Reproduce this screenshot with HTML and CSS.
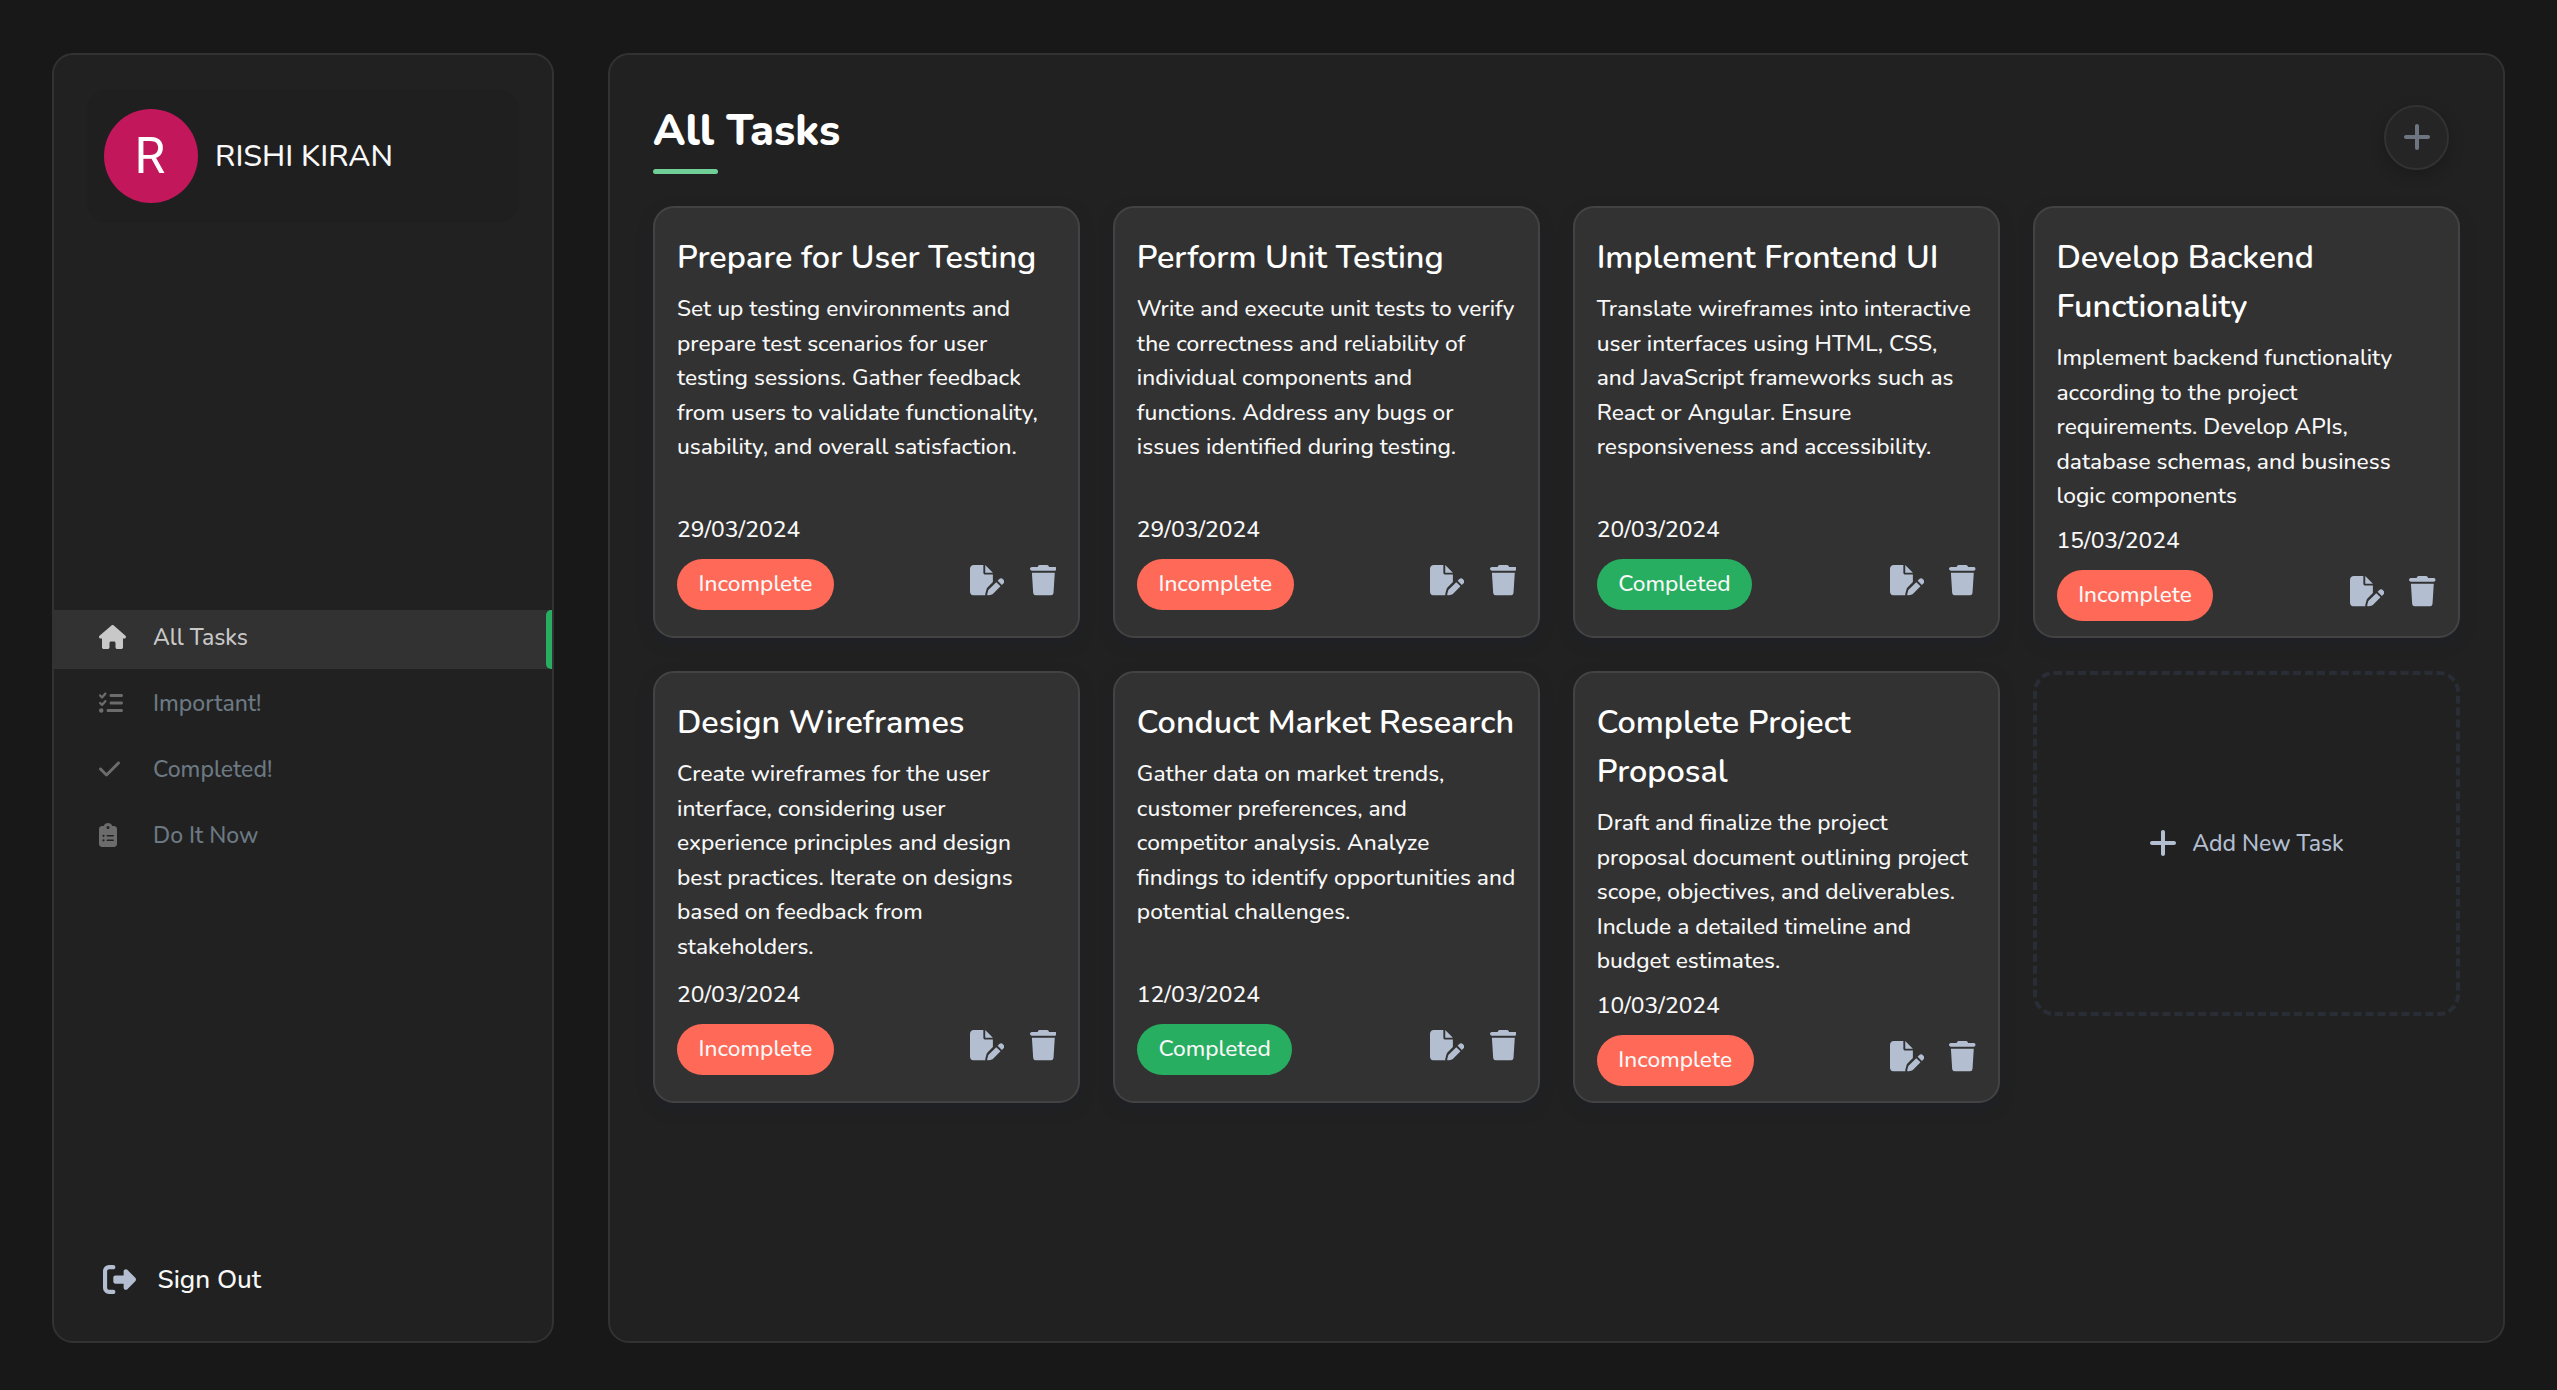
FILE: index.html
```html
<!DOCTYPE html>
<html lang="en">
<head>
<meta charset="utf-8">
<title>All Tasks</title>
<link rel="stylesheet" href="styles.css">
</head>
<body>
<svg class="sprite" xmlns="http://www.w3.org/2000/svg">
  <symbol id="house" viewBox="0 0 576 512"><path d="M575.8 255.5c0 18-15 32.1-32 32.1h-32l.7 160.2c0 2.7-.2 5.4-.5 8.1V472c0 22.1-17.9 40-40 40H456c-1.1 0-2.2 0-3.3-.1c-1.4 .1-2.8 .1-4.2 .1H416 392c-22.1 0-40-17.9-40-40V448 384c0-17.700-14.300-32-32-32H256c-17.700 0-32 14.300-32 32v64 24c0 22.100-17.900 40-40 40H160 128.100c-1.500 0-3-.1-4.500-.2c-1.200 .1-2.400 .2-3.600 .2H104c-22.100 0-40-17.900-40-40V360c0-.9 0-1.900 .1-2.800V287.600H32c-18 0-32-14-32-32.100c0-9 3-17 10-24L266.400 8c7-7 15-8 22-8s15 2 21 7L564.800 231.500c8 7 12 15 11 24z"/></symbol>
  <symbol id="list-check" viewBox="0 0 512 512"><path d="M152.100 38.200c9.900 8.900 10.700 24 1.800 33.900l-72 80c-4.400 4.900-10.600 7.800-17.200 7.900s-12.900-2.400-17.600-7L7 113C-2.300 103.600-2.300 88.400 7 79s24.600-9.400 33.900 0l22.100 22.100 55.100-61.200c8.900-9.900 24-10.700 33.900-1.800zm0 160c9.900 8.900 10.700 24 1.800 33.900l-72 80c-4.400 4.900-10.600 7.800-17.200 7.900s-12.900-2.400-17.600-7L7 273c-9.400-9.400-9.400-24.600 0-33.900s24.600-9.400 33.900 0l22.100 22.100 55.100-61.200c8.900-9.900 24-10.700 33.900-1.800zM224 96c0-17.700 14.300-32 32-32H480c17.700 0 32 14.300 32 32s-14.300 32-32 32H256c-17.700 0-32-14.300-32-32zm0 160c0-17.700 14.300-32 32-32H480c17.700 0 32 14.300 32 32s-14.300 32-32 32H256c-17.700 0-32-14.300-32-32zM160 416c0-17.700 14.300-32 32-32H480c17.700 0 32 14.300 32 32s-14.300 32-32 32H192c-17.700 0-32-14.300-32-32zM48 368a48 48 0 1 1 0 96 48 48 0 1 1 0-96z"/></symbol>
  <symbol id="check" viewBox="0 0 448 512"><path d="M438.600 105.400c12.500 12.500 12.500 32.800 0 45.300l-256 256c-12.500 12.500-32.800 12.500-45.300 0l-128-128c-12.500-12.500-12.500-32.800 0-45.300s32.800-12.500 45.300 0L160 338.700 393.400 105.400c12.500-12.500 32.800-12.500 45.300 0z"/></symbol>
  <symbol id="clipboard" viewBox="0 0 384 512"><path d="M192 0c-41.800 0-77.400 26.700-90.500 64H64C28.700 64 0 92.700 0 128V448c0 35.300 28.700 64 64 64H320c35.300 0 64-28.700 64-64V128c0-35.300-28.700-64-64-64H282.500C269.400 26.700 233.800 0 192 0zm0 64a32 32 0 1 1 0 64 32 32 0 1 1 0-64zM72 272a24 24 0 1 1 48 0 24 24 0 1 1 -48 0zm104-16H304c8.800 0 16 7.200 16 16s-7.200 16-16 16H176c-8.800 0-16-7.200-16-16s7.200-16 16-16zM72 368a24 24 0 1 1 48 0 24 24 0 1 1 -48 0zm88 0c0-8.800 7.200-16 16-16H304c8.800 0 16 7.200 16 16s-7.200 16-16 16H176c-8.800 0-16-7.200-16-16z"/></symbol>
  <symbol id="sign-out" viewBox="0 0 512 512"><path d="M377.900 105.900L500.700 228.700c7.200 7.200 11.300 17.100 11.300 27.300s-4.100 20.100-11.300 27.300L377.900 406.100c-6.400 6.400-15 9.900-24 9.900c-18.700 0-33.900-15.200-33.900-33.900l0-62.100-128 0c-17.700 0-32-14.300-32-32l0-64c0-17.700 14.300-32 32-32l128 0 0-62.100c0-18.700 15.200-33.900 33.900-33.900c9 0 17.600 3.600 24 9.900zM160 96L96 96c-17.700 0-32 14.300-32 32l0 256c0 17.700 14.300 32 32 32l64 0c17.700 0 32 14.300 32 32s-14.300 32-32 32l-64 0c-53 0-96-43-96-96L0 128C0 75 43 32 96 32l64 0c17.700 0 32 14.300 32 32s-14.300 32-32 32z"/></symbol>
  <symbol id="edit" viewBox="0 0 576 512"><path d="M0 64C0 28.700 28.700 0 64 0H224V128c0 17.700 14.300 32 32 32H384V285.700l-86.800 86.800c-10.300 10.300-17.500 23.100-21 37.200l-18.700 74.900c-2.300 9.200-1.800 18.800 1.300 27.500H64c-35.300 0-64-28.700-64-64V64zm384 64H256V0L384 128zM549.800 235.700l14.400 14.400c15.600 15.600 15.600 40.900 0 56.600l-29.400 29.400-71-71 29.400-29.400c15.600-15.600 40.900-15.600 56.600 0zM311.900 417L441.100 287.800l71 71L382.900 487.900c-4.100 4.100-9.200 7-14.900 8.400l-60.100 15c-5.500 1.400-11.200-.2-15.200-4.200s-5.600-9.700-4.200-15.200l15-60.100c1.400-5.600 4.300-10.800 8.400-14.900z"/></symbol>
  <symbol id="trash" viewBox="0 0 448 512"><path d="M135.200 17.700L128 32H32C14.300 32 0 46.300 0 64S14.300 96 32 96H416c17.700 0 32-14.300 32-32s-14.300-32-32-32H320l-7.200-14.300C307.400 6.800 296.300 0 284.200 0H163.800c-12.100 0-23.200 6.800-28.600 17.700zM416 128H32L53.200 467c1.600 25.300 22.600 45 47.900 45H346.900c25.300 0 46.300-19.700 47.900-45L416 128z"/></symbol>
  <symbol id="plus" viewBox="0 0 448 512"><path d="M256 80c0-17.700-14.300-32-32-32s-32 14.300-32 32V224H48c-17.700 0-32 14.300-32 32s14.300 32 32 32H192V432c0 17.700 14.300 32 32 32s32-14.300 32-32V288H400c17.700 0 32-14.300 32-32s-14.300-32-32-32H256V80z"/></symbol>
</svg>

<nav class="sidebar">
  <div class="profile">
    <div class="avatar">R</div>
    <h1 class="name">RISHI KIRAN</h1>
  </div>
  <ul class="nav">
    <li class="nav-item active"><span class="nav-icon"><svg class="w576"><use href="#house"/></svg></span>All Tasks</li>
    <li class="nav-item"><span class="nav-icon"><svg class="w512"><use href="#list-check"/></svg></span>Important!</li>
    <li class="nav-item"><span class="nav-icon"><svg class="w448"><use href="#check"/></svg></span>Completed!</li>
    <li class="nav-item"><span class="nav-icon"><svg class="w384"><use href="#clipboard"/></svg></span>Do It Now</li>
  </ul>
  <div class="sign-out"><svg class="w512"><use href="#sign-out"/></svg>Sign Out</div>
</nav>

<main class="main">
  <header class="head">
    <h2 class="heading">All Tasks</h2>
    <button class="add"><svg class="w448"><use href="#plus"/></svg></button>
  </header>
  <div class="grid">
    <article class="card">
      <h3>Prepare for User Testing</h3>
      <p>Set up testing environments and<br>prepare test scenarios for user<br>testing sessions. Gather feedback<br>from users to validate functionality,<br>usability, and overall satisfaction.</p>
      <time>29/03/2024</time>
      <footer><span class="badge">Incomplete</span><svg class="w576"><use href="#edit"/></svg><svg class="w448"><use href="#trash"/></svg></footer>
    </article>
    <article class="card">
      <h3>Perform Unit Testing</h3>
      <p>Write and execute unit tests to verify<br>the correctness and reliability of<br>individual components and<br>functions. Address any bugs or<br>issues identified during testing.</p>
      <time>29/03/2024</time>
      <footer><span class="badge">Incomplete</span><svg class="w576"><use href="#edit"/></svg><svg class="w448"><use href="#trash"/></svg></footer>
    </article>
    <article class="card">
      <h3>Implement Frontend UI</h3>
      <p>Translate wireframes into interactive<br>user interfaces using HTML, CSS,<br>and JavaScript frameworks such as<br>React or Angular. Ensure<br>responsiveness and accessibility.</p>
      <time>20/03/2024</time>
      <footer><span class="badge done">Completed</span><svg class="w576"><use href="#edit"/></svg><svg class="w448"><use href="#trash"/></svg></footer>
    </article>
    <article class="card">
      <h3>Develop Backend<br>Functionality</h3>
      <p>Implement backend functionality<br>according to the project<br>requirements. Develop APIs,<br>database schemas, and business<br>logic components</p>
      <time>15/03/2024</time>
      <footer><span class="badge">Incomplete</span><svg class="w576"><use href="#edit"/></svg><svg class="w448"><use href="#trash"/></svg></footer>
    </article>
    <article class="card">
      <h3>Design Wireframes</h3>
      <p>Create wireframes for the user<br>interface, considering user<br>experience principles and design<br>best practices. Iterate on designs<br>based on feedback from<br>stakeholders.</p>
      <time>20/03/2024</time>
      <footer><span class="badge">Incomplete</span><svg class="w576"><use href="#edit"/></svg><svg class="w448"><use href="#trash"/></svg></footer>
    </article>
    <article class="card">
      <h3>Conduct Market Research</h3>
      <p>Gather data on market trends,<br>customer preferences, and<br>competitor analysis. Analyze<br>findings to identify opportunities and<br>potential challenges.</p>
      <time>12/03/2024</time>
      <footer><span class="badge done">Completed</span><svg class="w576"><use href="#edit"/></svg><svg class="w448"><use href="#trash"/></svg></footer>
    </article>
    <article class="card">
      <h3>Complete Project<br>Proposal</h3>
      <p>Draft and finalize the project<br>proposal document outlining project<br>scope, objectives, and deliverables.<br>Include a detailed timeline and<br>budget estimates.</p>
      <time>10/03/2024</time>
      <footer><span class="badge">Incomplete</span><svg class="w576"><use href="#edit"/></svg><svg class="w448"><use href="#trash"/></svg></footer>
    </article>
    <div class="new-task"><svg class="w448"><use href="#plus"/></svg>Add New Task</div>
  </div>
</main>
</body>
</html>
```
FILE: styles.css
```css
* { box-sizing: border-box; margin: 0; padding: 0; }

body {
  display: flex;
  gap: 54px;
  height: 1390px;
  padding: 53px 52px 47px;
  background: #181818;
  color: #f8f8f8;
  font-family: Nunito, Lato, "Open Sans", sans-serif;
  font-size: 22.7px;
  font-weight: 500;
  white-space: nowrap;
  overflow: hidden;
}

.sprite { position: absolute; width: 0; height: 0; }

svg { height: 1em; fill: currentColor; flex: none; display: block; }
.w576 { width: 1.125em; }
.w512 { width: 1em; }
.w448 { width: .875em; }
.w384 { width: .75em; }

.sidebar, .main {
  background: #212121;
  border: 2px solid #323232;
  border-radius: 21px;
}

.sidebar {
  display: flex;
  flex-direction: column;
  justify-content: space-between;
  width: 502px;
  flex: none;
}

.profile {
  display: flex;
  align-items: center;
  gap: 17px;
  height: 134px;
  margin: 34px 33px 0;
  padding-left: 17px;
  background: #1f1f1f;
  border-radius: 21px;
}

.avatar {
  width: 94px;
  height: 94px;
  border-radius: 50%;
  background: #c2185b;
  color: #fff;
  font: 400 50px/94px Roboto, sans-serif;
  text-align: center;
  text-indent: -2px;
}

.name { font-size: 30.3px; font-weight: 500; }

.nav { list-style: none; display: grid; gap: 7px; margin-bottom: 4px; }

.nav-item {
  display: flex;
  align-items: center;
  height: 59px;
  padding: 0 0 4px 45px;
  color: #6c7983;
  font-size: 23px;
}

.nav-icon { width: 54px; font-size: 24px; color: #6c6c6c; }

.active {
  position: relative;
  background: #323232;
  color: #c8c8c8;
}
.active .nav-icon { color: #c8c8c8; }
.active::after {
  content: "";
  position: absolute;
  right: 0;
  top: 0;
  width: 6px;
  height: 100%;
  background: #27ae60;
  border-radius: 5px 0 0 5px;
}

.sign-out {
  display: flex;
  align-items: center;
  gap: 21.5px;
  height: 44px;
  margin: 0 0 40px 49px;
  font-size: 26.1px;
}
.sign-out svg { font-size: 33px; color: #b3bfd1; }

.main { flex: 1; padding: 43px; }

.head {
  display: flex;
  justify-content: space-between;
  height: 108px;
  padding-right: 11px;
}

.heading {
  align-self: flex-start;
  height: 76px;
  padding-top: 3px;
  font-size: 43.1px;
  font-weight: 800;
  line-height: 60px;
  color: #fff;
}
.heading::after {
  content: "";
  display: block;
  width: 65px;
  height: 5px;
  margin-top: 8px;
  border-radius: 3px;
  background: #6fcf97;
}

.add {
  display: grid;
  place-items: center;
  width: 65px;
  height: 65px;
  margin-top: 7px;
  padding-bottom: 2px;
  border: 2px solid #323232;
  border-radius: 50%;
  background: #252525;
  box-shadow: 0 5px 16px rgba(0, 0, 0, .22);
  color: #6c7580;
  font-size: 32px;
}

.grid {
  display: grid;
  grid-template-columns: repeat(4, minmax(0, 1fr));
  gap: 33px 32.4px;
}

.card {
  display: flex;
  flex-direction: column;
  height: 432px;
  padding: 25px 22px 26px;
  background: #323232;
  border: 2px solid #434343;
  border-radius: 21px;
  box-shadow: 0 6px 13px rgba(30, 31, 44, .5);
}
.card > * { flex: none; }
.card h3 { margin-bottom: 10.6px; font-size: 32.4px; font-weight: 600; line-height: 48.8px; color: #fff; }
.card p { margin-bottom: 10px; line-height: 34.5px; }
.card time { margin-top: auto; font-size: 22.9px; line-height: 34.5px; }

.card footer { display: flex; gap: 25.5px; margin-top: 12px; }
.card footer svg { margin-top: 6px; font-size: 30.5px; color: #b3bfd1; }

.badge {
  height: 51px;
  margin-right: auto;
  padding: 0 21.6px;
  border-radius: 26px;
  background: #ff6957;
  line-height: 49px;
}
.done { background: #27ae60; }

.new-task {
  display: flex;
  align-items: center;
  justify-content: center;
  gap: 15.5px;
  height: 345px;
  padding-bottom: 1px;
  border: 4px dashed #292e36;
  border-radius: 21px;
  color: #b3bfd1;
  font-size: 23px;
}
.new-task svg { font-size: 32px; }
```
